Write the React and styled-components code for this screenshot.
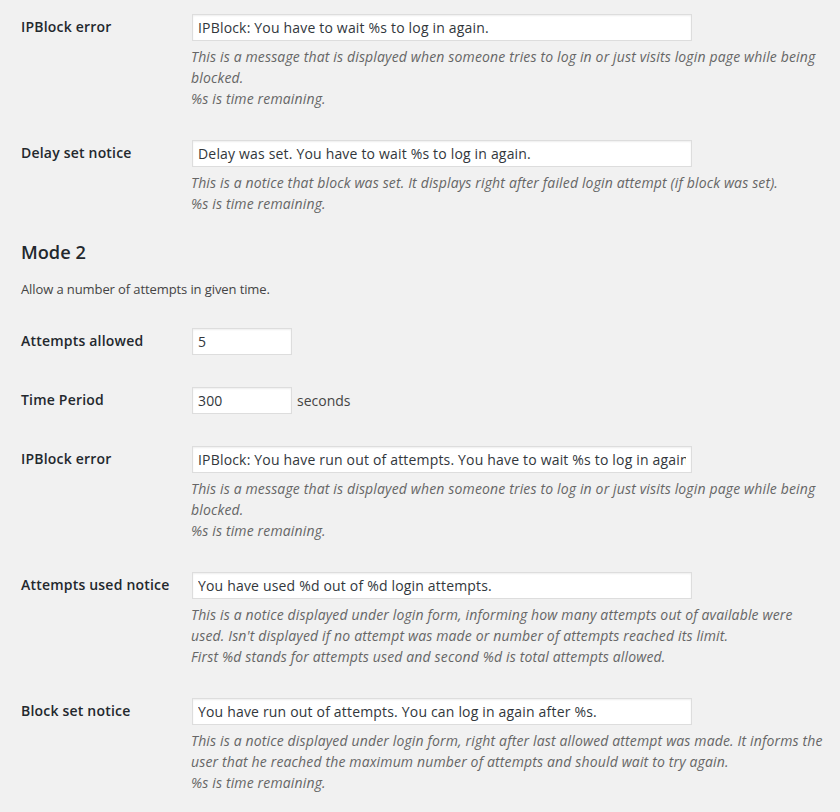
import React from "react";
import styled, { createGlobalStyle } from "styled-components";

const GlobalStyle = createGlobalStyle`
  html, body {
    margin: 0;
    padding: 0;
    background: #f1f1f1;
  }
  body {
    font-family: "Open Sans", "Liberation Sans", sans-serif;
    font-size: 13px;
    color: #444;
    overflow: hidden;
  }
`;

const Page = styled.div`
  padding: 0 16px 0 21px;
  margin-top: -2px;
`;

const Section = styled.div`
  display: flex;
  flex-direction: column;
`;

const Heading = styled.h2`
  margin: 11px 0 0;
  font-size: 18.2px;
  line-height: 25.5px;
  font-weight: 600;
  color: #23282d;
`;

const Intro = styled.p`
  margin: 14px 0 13px;
  font-size: 13px;
  line-height: 1.5;
  letter-spacing: -0.1px;
  color: #444;
`;

const Row = styled.div`
  display: flex;
  align-items: flex-start;
`;

const Label = styled.div`
  width: 170px;
  flex: none;
  padding: 20px 0;
  font-size: 14px;
  line-height: 1.3;
  font-weight: 600;
  letter-spacing: 0.2px;
  color: #23282d;
`;

const Field = styled.div`
  flex: 1;
  padding: 15px 0;
  font-size: 14px;
`;

const InputLine = styled.div`
  display: flex;
  align-items: center;
  gap: 5px;
`;

const TextInput = styled.input`
  box-sizing: border-box;
  width: ${(p) => (p.$small ? "100px" : "500px")};
  height: 27px;
  margin: 1px 0 1px 1px;
  padding: 0 5px;
  border: 1px solid #ddd;
  box-shadow: inset 0 1px 2px rgba(0, 0, 0, 0.07);
  background: #fff;
  font-family: "Open Sans", "Liberation Sans", sans-serif;
  font-size: 14px;
  letter-spacing: 0.18px;
  color: #32373c;
  outline: none;
`;

const Unit = styled.span`
  font-size: 14px;
  color: #444;
`;

const Description = styled.p`
  margin: 4px 0 0;
  font-size: 14px;
  line-height: 21px;
  font-style: italic;
  letter-spacing: 0.15px;
  color: #666;
`;

const SettingRow = ({ label, value, small, unit, lines = [] }) => (
  <Row>
    <Label>{label}</Label>
    <Field>
      <InputLine>
        <TextInput type="text" defaultValue={value} $small={small} />
        {unit && <Unit>{unit}</Unit>}
      </InputLine>
      {lines.length > 0 && (
        <Description>
          {lines.map((line, i) => (
            <React.Fragment key={i}>
              {i > 0 && <br />}
              {line}
            </React.Fragment>
          ))}
        </Description>
      )}
    </Field>
  </Row>
);

const App = () => (
  <>
    <GlobalStyle />
    <Page>
      <Section>
        <SettingRow
          label="IPBlock error"
          value="IPBlock: You have to wait %s to log in again."
          lines={[
            "This is a message that is displayed when someone tries to log in or just visits login page while being blocked.",
            "%s is time remaining.",
          ]}
        />
        <SettingRow
          label="Delay set notice"
          value="Delay was set. You have to wait %s to log in again."
          lines={[
            "This is a notice that block was set. It displays right after failed login attempt (if block was set).",
            "%s is time remaining.",
          ]}
        />
      </Section>

      <Section>
        <Heading>Mode 2</Heading>
        <Intro>Allow a number of attempts in given time.</Intro>
        <SettingRow label="Attempts allowed" value="5" small />
        <SettingRow label="Time Period" value="300" small unit="seconds" />
        <SettingRow
          label="IPBlock error"
          value="IPBlock: You have run out of attempts. You have to wait %s to log in again."
          lines={[
            "This is a message that is displayed when someone tries to log in or just visits login page while being blocked.",
            "%s is time remaining.",
          ]}
        />
        <SettingRow
          label="Attempts used notice"
          value="You have used %d out of %d login attempts."
          lines={[
            "This is a notice displayed under login form, informing how many attempts out of available were used. Isn't displayed if no attempt was made or number of attempts reached its limit.",
            "First %d stands for attempts used and second %d is total attempts allowed.",
          ]}
        />
        <SettingRow
          label="Block set notice"
          value="You have run out of attempts. You can log in again after %s."
          lines={[
            "This is a notice displayed under login form, right after last allowed attempt was made. It informs the user that he reached the maximum number of attempts and should wait to try again.",
            "%s is time remaining.",
          ]}
        />
      </Section>
    </Page>
  </>
);

export default App;
